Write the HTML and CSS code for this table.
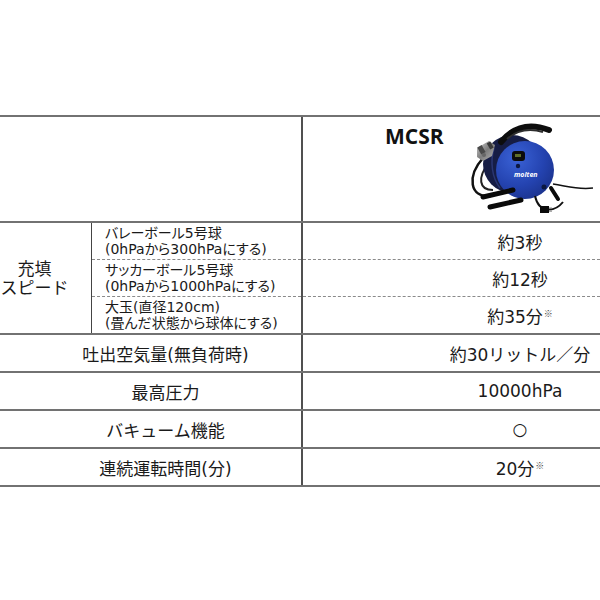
FILE: index.html
```html
<!DOCTYPE html>
<html lang="ja">
<head>
<meta charset="utf-8">
<link rel="stylesheet" href="styles.css">
</head>
<body>
<div class="sheet">
  <div class="row head">
    <div class="lab"></div>
    <div class="val headval">
      <span class="model">MCSR</span>
      <svg class="product" width="135" height="100" viewBox="0 0 135 100" xmlns="http://www.w3.org/2000/svg">
        <defs>
          <radialGradient id="disc" cx="0.35" cy="0.3" r="0.8">
            <stop offset="0" stop-color="#3a62d6"/>
            <stop offset="0.6" stop-color="#2443b0"/>
            <stop offset="1" stop-color="#1a318a"/>
          </radialGradient>
          <linearGradient id="metal" x1="0" y1="0" x2="1" y2="1">
            <stop offset="0" stop-color="#cfcfcf"/>
            <stop offset="0.5" stop-color="#7d7d7d"/>
            <stop offset="1" stop-color="#b5b5b5"/>
          </linearGradient>
        </defs>
        <!-- hose loop left -->
        <path d="M20,40 C4,58 6,80 28,78" fill="none" stroke="#111" stroke-width="2.5"/>
        <path d="M26,44 C14,60 16,72 30,72" fill="none" stroke="#222" stroke-width="2"/>
        <!-- drum back -->
        <circle cx="49" cy="46" r="29" fill="#161d45"/>
        <path d="M28,26 L42,33 L42,72 L28,65 Z" fill="#161d45"/>
        <path d="M49,17 L62,23 L62,81 L49,75 Z" fill="#161d45"/>
        <path d="M31,30 C27,44 29,60 37,70" fill="none" stroke="#2a3672" stroke-width="1.5"/>
        <!-- compressor -->
        <path d="M14,30 L26,23 L32,27 L29,38 L20,43 L14,39 Z" fill="url(#metal)"/>
        <rect x="16" y="28" width="5" height="8" fill="#4a4a4a" transform="rotate(-30 18 32)"/>
        <rect x="25" y="24" width="4" height="7" fill="#3a3a3a" transform="rotate(-30 27 27)"/>
        <circle cx="21" cy="37" r="2" fill="#666"/>
        <!-- handle -->
        <path d="M38,24 Q57,1 86,12" fill="none" stroke="#0d0d0d" stroke-width="6" stroke-linecap="round"/>
        <path d="M44,21 Q59,8 80,14" fill="none" stroke="#2e2e2e" stroke-width="2"/>
        <!-- front disc -->
        <circle cx="62" cy="52" r="29" fill="url(#disc)"/>
        <rect x="49" y="33" width="13" height="10" rx="3" fill="#0c0c0c"/>
        <rect x="52" y="36" width="6" height="3" fill="#5f6f28"/>
        <circle cx="55" cy="48" r="2.2" fill="#0c1840"/>
        <text x="51" y="59" class="brand">molten</text>
        <circle cx="81" cy="69" r="2.5" fill="#0c1840"/>
        <!-- feet -->
        <path d="M20,79 L50,72" stroke="#0a0a0a" stroke-width="5" stroke-linecap="round"/>
        <path d="M27,89 L58,82" stroke="#0a0a0a" stroke-width="5" stroke-linecap="round"/>
        <path d="M88,70 L95,81" stroke="#0a0a0a" stroke-width="4" stroke-linecap="round"/>
        <!-- cord right -->
        <path d="M90,66 C104,68 114,72 130,70" fill="none" stroke="#111" stroke-width="1.5"/>
        <!-- lower hose and plug -->
        <path d="M72,78 C76,96 92,94 100,84" fill="none" stroke="#111" stroke-width="2"/>
        <rect x="77" y="88" width="9" height="7" fill="#0a0a0a"/>
        <rect x="86" y="89.5" width="3" height="1.2" fill="#888"/>
        <rect x="86" y="92.5" width="3" height="1.2" fill="#888"/>
      </svg>
    </div>
  </div>

  <div class="row group">
    <div class="lab grouplab">
      <div class="gname">充填<br>スピード</div>
      <div class="subs">
        <div class="sub">バレーボール5号球<br>(0hPaから300hPaにする)</div>
        <div class="sub">サッカーボール5号球<br>(0hPaから1000hPaにする)</div>
        <div class="sub">大玉(直径120cm)<br>(畳んだ状態から球体にする)</div>
      </div>
    </div>
    <div class="val vals">
      <div class="v">約3秒</div>
      <div class="v">約12秒</div>
      <div class="v">約35分<sup class="note">※</sup></div>
    </div>
  </div>

  <div class="row single">
    <div class="lab">吐出空気量(無負荷時)</div>
    <div class="val">約30リットル／分</div>
  </div>
  <div class="row single">
    <div class="lab">最高圧力</div>
    <div class="val">10000hPa</div>
  </div>
  <div class="row single">
    <div class="lab">バキューム機能</div>
    <div class="val">○</div>
  </div>
  <div class="row single">
    <div class="lab">連続運転時間(分)</div>
    <div class="val">20分<sup class="note">※</sup></div>
  </div>
</div>
</body>
</html>
```

FILE: styles.css
```css
html, body {
  margin: 0;
  padding: 0;
  background: #fff;
}
body {
  font-family: "DejaVu Sans", "Noto Sans CJK JP", sans-serif;
  color: #1a1a1a;
  width: 600px;
  overflow: hidden;
}
.sheet {
  margin-top: 115px;
  border-top: 2px solid #727272;
}
.row {
  display: flex;
  border-bottom: 2px solid #727272;
}
.lab {
  width: 303px;
  flex: none;
  box-sizing: border-box;
  border-right: 2px solid #505050;
}
.val {
  flex: 1;
}
.head {
  height: 104px;
}
.headval {
  display: flex;
  align-items: flex-start;
}
.model {
  font-family: "Open Sans", "Liberation Sans", sans-serif;
  font-weight: 700;
  font-size: 21px;
  line-height: 24px;
  margin-left: 82px;
  margin-top: 7px;
  color: #111;
}
.product {
  display: block;
  margin-left: 19px;
  margin-top: 1px;
}
.brand {
  font-family: "Open Sans", "Liberation Sans", sans-serif;
  font-size: 7px;
  font-weight: 700;
  font-style: italic;
  fill: #ffffff;
}

/* filling speed group */
.grouplab {
  display: flex;
}
.gname {
  width: 92px;
  flex: none;
  box-sizing: border-box;
  border-right: 1px solid #444;
  display: flex;
  align-items: center;
  justify-content: center;
  padding-right: 22px;
  padding-top: 2px;
  text-align: center;
  font-size: 17px;
  line-height: 19px;
}
.subs {
  flex: 1;
}
.sub {
  height: 37px;
  box-sizing: border-box;
  border-bottom: 1px dashed #8a8a8a;
  padding-left: 13px;
  display: flex;
  flex-direction: column;
  justify-content: center;
  font-size: 14px;
  line-height: 16px;
  font-feature-settings: "palt";
}
.sub:last-child,
.v:last-child {
  border-bottom: none;
  height: 36px;
}
.v {
  height: 37px;
  box-sizing: border-box;
  border-bottom: 1px dashed #8a8a8a;
  display: flex;
  align-items: center;
  justify-content: center;
  padding-left: 137px;
  font-size: 17px;
}

/* single rows */
.single .lab,
.single .val {
  height: 36px;
  display: flex;
  align-items: center;
  justify-content: center;
  font-size: 17px;
}
.single .lab {
  padding-left: 30px;
}
.single .val {
  padding-left: 137px;
}
.note {
  font-family: "Noto Sans CJK JP", sans-serif;
  font-size: 9px;
  vertical-align: top;
  line-height: 1;
  margin-top: -4px;
  margin-left: 1px;
  color: #444;
}
```
